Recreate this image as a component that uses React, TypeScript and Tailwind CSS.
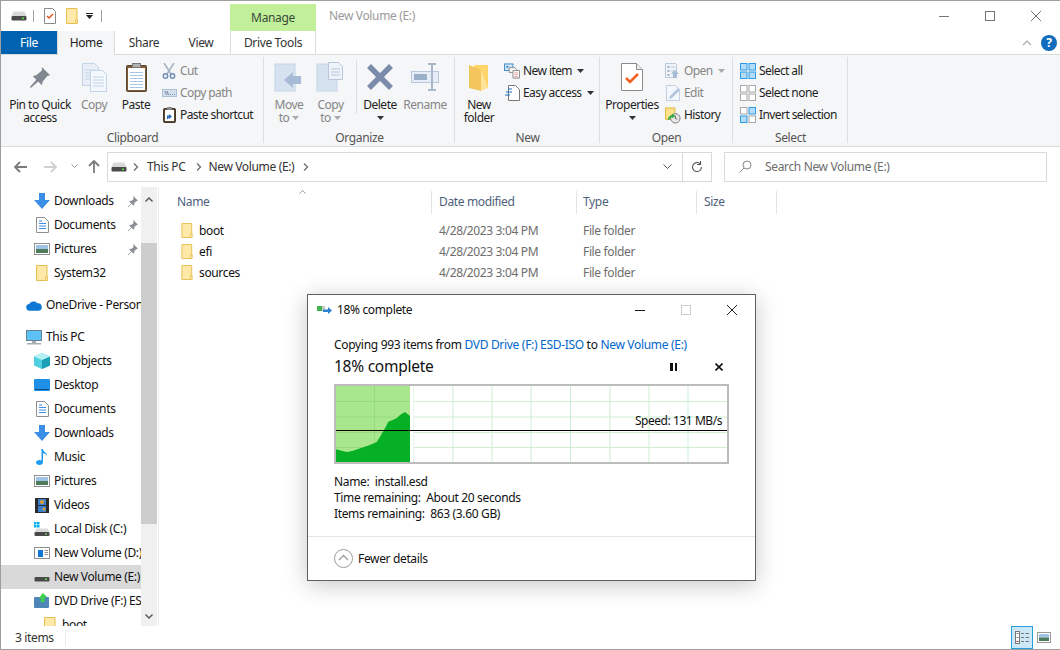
import type { ReactNode } from "react";

const Drive = ({ className = "" }: { className?: string }) => (
  <svg width="16" height="10" viewBox="0 0 16 10" className={className}>
    <path d="M2.5 0.5h11L15.5 5h-15z" fill="#d9d9d9" />
    <rect x="0.5" y="5" width="15" height="4.5" rx="1" fill="#4a4a4a" />
    <rect x="11" y="6.5" width="2" height="1.5" fill="#5ddc4a" />
  </svg>
);

const Folder = ({ w = 12, h = 16 }: { w?: number; h?: number }) => (
  <svg width={w} height={h} viewBox="0 0 12 16">
    <path d="M0.5 0.5h10.5v15h-10.5z" fill="#ffe9a8" stroke="#e6bf4e" />
    <path d="M9.5 11.5h2v4h-2z" fill="#ffe9a8" stroke="#e6bf4e" strokeWidth="0.8" />
  </svg>
);

const DownArrow = () => (
  <svg width="16" height="16" viewBox="0 0 16 16">
    <path d="M5 0h6v7h5l-8 9-8-9h5z" fill="#3a8ee6" />
  </svg>
);

const DocIcon = () => (
  <svg width="13" height="16" viewBox="0 0 13 16">
    <path d="M0.5 0.5h8l4 4v11h-12z" fill="#fff" stroke="#8f8f8f" />
    <path d="M3 4h3M3 6.5h7M3 9h7M3 11.5h7" stroke="#3a8ee6" />
  </svg>
);

const PicIcon = () => (
  <svg width="16" height="12" viewBox="0 0 16 12">
    <rect x="0.5" y="0.5" width="15" height="11" fill="#fff" stroke="#8f8f8f" />
    <rect x="2" y="2" width="12" height="4" fill="#9fc3e6" />
    <rect x="2" y="6" width="12" height="4" fill="#4f7d5c" />
  </svg>
);

const PinSmall = () => (
  <svg width="11" height="11" viewBox="0 0 11 11">
    <path d="M6.5 0.5l4 4-1.5.5-2 2.5-.5 2-2-2-3.5 3.5 3.5-3.5-2-2 2-.5 2.5-2z" fill="#8a8f96" stroke="#8a8f96" strokeWidth="0.6" />
  </svg>
);

const Cloud = () => (
  <svg width="17" height="11" viewBox="0 0 17 11">
    <path d="M4 11a3.5 3.5 0 0 1-.5-7A5 5 0 0 1 12 3.2 3.9 3.9 0 0 1 13.5 11z" fill="#0f78d4" />
  </svg>
);

const Monitor = () => (
  <svg width="16" height="15" viewBox="0 0 16 15">
    <rect x="0.5" y="0.5" width="15" height="10" fill="#5cc2f5" stroke="#6a7f90" />
    <rect x="6" y="11" width="4" height="2" fill="#a5adb5" />
    <rect x="1" y="13" width="14" height="1.5" fill="#a5adb5" />
  </svg>
);

const Cube = () => (
  <svg width="16" height="16" viewBox="0 0 16 16">
    <path d="M8 0l8 3.5v9L8 16l-8-3.5v-9z" fill="#4fd0e0" />
    <path d="M8 7l8-3.5v9L8 16z" fill="#1a9fb5" />
    <path d="M8 0l8 3.5L8 7 0 3.5z" fill="#b5f0f5" />
  </svg>
);

const Desktop = () => (
  <svg width="16" height="12" viewBox="0 0 16 12">
    <rect width="16" height="12" rx="1" fill="#1e90e8" />
    <rect x="1" y="10" width="14" height="1" fill="#0d4f8c" />
  </svg>
);

const Music = () => (
  <svg width="12" height="16" viewBox="0 0 12 16">
    <path d="M5.5 0h1.5c0 3 4 3.5 4 7-1-2-2.500-2.500-4-2.800V13c0 1.700-1.700 3-3.500 3S0 15 0 13.500 1.700 11 3.500 11c.8 0 1.500.2 2 .5z" fill="#1e9bf0" />
  </svg>
);

const Video = () => (
  <svg width="14" height="15" viewBox="0 0 14 15">
    <rect width="14" height="15" fill="#2b2b2b" />
    <rect x="3" y="1" width="8" height="6" fill="#3a7fd0" />
    <rect x="3" y="8" width="8" height="6" fill="#3a7fd0" />
    <circle cx="7" cy="4" r="2" fill="#e0a030" />
    <circle cx="9" cy="11" r="1.500" fill="#e0a030" />
  </svg>
);

const LocalDisk = () => (
  <svg width="16" height="14" viewBox="0 0 16 14">
    <path d="M0 0h2.500v2.500H0zM3 0h2.500v2.500H3zM0 3h2.500v2.500H0zM3 3h2.500v2.500H3z" fill="#00adef" />
    <path d="M2.500 6.500h11L15.500 10H.5z" fill="#d9d9d9" />
    <rect x="0.5" y="10" width="15" height="4" rx="1" fill="#4a4a4a" />
    <rect x="11" y="11.500" width="2" height="1.200" fill="#5ddc4a" />
  </svg>
);

const VolumeD = () => (
  <svg width="16" height="12" viewBox="0 0 16 12">
    <rect x="0.5" y="0.5" width="15" height="11" fill="#fff" stroke="#8f8f8f" />
    <rect x="4" y="3" width="5" height="7" fill="#0f78d4" />
    <path d="M10.500 3.500H14M10.500 5.500H14M10.500 7.500H14" stroke="#8f8f8f" />
  </svg>
);

const Dvd = () => (
  <svg width="16" height="16" viewBox="0 0 16 16">
    <rect x="0" y="4" width="15" height="11" rx="1" fill="#4f86b8" />
    <path d="M9 0l4 4-2.500.5V9H6l1.500-2.500L5 5z" fill="#3fd14a" />
  </svg>
);

const Clipboard = () => (
  <svg width="21" height="30" viewBox="0 0 21 30">
    <rect x="0.500" y="3.500" width="20" height="26" rx="1" fill="#7a5a38" stroke="#5a452e" />
    <rect x="2" y="6" width="17" height="22" fill="#fff" />
    <path d="M4 10.500h13M4 13.500h13M4 16.500h13M4 19.500h13M4 22.500h13M4 25.500h13" stroke="#a8c6ea" />
    <rect x="6.500" y="1.500" width="8" height="4" fill="#b0b0b0" stroke="#777" />
  </svg>
);

const Pin = () => (
  <svg width="22" height="22" viewBox="0 0 24 24">
    <path d="M14 1l9 9-3 1-5 6-1 4-4-4-8 7-1-1 7-8-4-4 4-1 6-5z" fill="#7f8790" />
  </svg>
);

const CopyDocs = ({ c = "#c3d4ea" }: { c?: string }) => (
  <svg width="25" height="29" viewBox="0 0 25 29">
    <path d="M0.500 0.500h12l4 4v18h-16z" fill="#e9eff7" stroke={c} />
    <path d="M3 7h10M3 10h10M3 13h10M3 16h10" stroke={c} />
    <path d="M8.500 7.500h12l4 4v17h-16z" fill="#f4f7fb" stroke={c} />
    <path d="M11 14h11M11 17h11M11 20h11M11 23h11" stroke={c} />
  </svg>
);

const PanelArrow = ({ copy }: { copy?: boolean }) => (
  <svg width="30" height="30" viewBox="0 0 30 30">
    <rect x="1" y="2" width="20" height="27" fill="#d7e2f1" stroke="#c6d4e8" />
    {copy ? (
      <>
        <path d="M12.500 0.500h10l4 4v13h-14z" fill="#eef3f9" stroke="#b7c6da" />
        <path d="M15 7h9M15 10h9M15 13h9" stroke="#b7c6da" />
      </>
    ) : (
      <path d="M10 19l9-8v4h8v8h-8v4z" transform="translate(0 -1)" fill="#a6bbd6" />
    )}
  </svg>
);

const BigX = () => (
  <svg width="28" height="28" viewBox="0 0 28 28">
    <path d="M3 3l22 22M25 3L3 25" stroke="#7b8cab" strokeWidth="5.500" />
  </svg>
);

const RenameIcon = () => (
  <svg width="28" height="28" viewBox="0 0 28 28">
    <rect x="0.500" y="8.500" width="27" height="11" fill="#e6edf6" stroke="#b9c8dc" />
    <rect x="3" y="11" width="13" height="6" fill="#9db0ca" />
    <path d="M17 1h8M21 1v26M17 27h8" stroke="#a9b7ca" strokeWidth="2" fill="none" />
  </svg>
);

const NewFolderIcon = () => (
  <svg width="20" height="28" viewBox="0 0 20 28">
    <path d="M5 2h14v23H5z" fill="#ffd56a" />
    <path d="M0 2l12 5v21L0 25z" fill="#f2c65c" />
    <path d="M12 7v21l7-3" fill="#ffe49a" />
  </svg>
);

const PropsIcon = () => (
  <svg width="22" height="28" viewBox="0 0 22 28">
    <path d="M0.500 0.500h15l6 6v21h-21z" fill="#fff" stroke="#8a8a8a" />
    <path d="M15.500 0.500v6h6" fill="#eee" stroke="#8a8a8a" />
    <path d="M5 15l4 4 8-8" fill="none" stroke="#f0611e" strokeWidth="2.500" />
  </svg>
);

const PropsSmall = () => (
  <svg width="12" height="16" viewBox="0 0 12 16">
    <path d="M0.500 0.500h8l3 3v12h-11z" fill="#fff" stroke="#8a8a8a" />
    <path d="M3 8l2 2 4-4" fill="none" stroke="#e8541c" strokeWidth="1.500" />
  </svg>
);

const Caret = ({ c = "#333" }: { c?: string }) => (
  <svg width="7" height="4" viewBox="0 0 7 4" className="shrink-0">
    <path d="M0 0h7L3.500 4z" fill={c} />
  </svg>
);

const Scissors = () => (
  <svg width="16" height="16" viewBox="0 0 16 16">
    <path d="M3 0l7 11M13 0L6 11" stroke="#a9b4c4" strokeWidth="1.600" />
    <circle cx="4.500" cy="13" r="2.200" fill="none" stroke="#6f8cb5" strokeWidth="1.400" />
    <circle cx="11.500" cy="13" r="2.200" fill="none" stroke="#6f8cb5" strokeWidth="1.400" />
  </svg>
);

const CopyPath = () => (
  <svg width="15" height="8" viewBox="0 0 15 8">
    <rect x="0.500" y="0.500" width="14" height="7" fill="#d5e0ef" stroke="#aebfd6" />
    <path d="M3 2l1.500 4M5 2l1.500 4M8 5.500h.8M10 5.500h.8M12 5.500h.8" stroke="#5d6f88" strokeWidth="0.800" />
  </svg>
);

const PasteShort = () => (
  <svg width="13" height="16" viewBox="0 0 13 16">
    <rect x="0.500" y="1.500" width="12" height="14" rx="1" fill="#5b4630" stroke="#46372a" />
    <rect x="2" y="3" width="9" height="11" fill="#fff" />
    <rect x="4" y="0" width="5" height="3" fill="#8a8a8a" />
    <path d="M4 12V8.500h2V7l3 2.500L6 12v-1.500H5.500V12z" fill="#2466b5" />
  </svg>
);

const NewItem = () => (
  <svg width="17" height="16" viewBox="0 0 17 16">
    <rect x="0.500" y="0.500" width="9" height="7" fill="#cfe3f7" stroke="#3f88c5" />
    <rect x="2.500" y="2.500" width="2" height="2" fill="#3f88c5" />
    <path d="M5.500 4.500h6l2 2v3h-8z" fill="#fff" stroke="#888" />
    <path d="M9.500 7.500h7v8h-7z" fill="#fff" stroke="#888" />
    <path d="M11 10h4M11 12h4M11 14h4" stroke="#e39a9a" />
  </svg>
);

const EasyAccess = () => (
  <svg width="15" height="16" viewBox="0 0 15 16">
    <path d="M3.500 0.500h7l4 4v11h-11z" fill="#fff" stroke="#777" />
    <path d="M3 4h4M1 7h6M0 10h5" stroke="#1f6fc0" strokeWidth="1.200" />
  </svg>
);

const OpenIcon = () => (
  <svg width="16" height="16" viewBox="0 0 16 16">
    <path d="M0.500 0.500h10l1 1v13h-11z" fill="#f0f4f9" stroke="#b9c8dc" />
    <path d="M2.500 3h2v2h-2zM2.500 7h2v2h-2zM2.500 11h2v2h-2z" fill="#9db0ca" />
    <path d="M6 4h4M6 8h3" stroke="#b9c8dc" />
    <path d="M8 15v-4H6l4-4 4 4h-2v4z" fill="#a6bbd6" />
  </svg>
);

const EditIcon = () => (
  <svg width="15" height="16" viewBox="0 0 15 16">
    <path d="M0.500 0.500h9l4 4v11h-13z" fill="#f4f7fb" stroke="#c3d0e2" />
    <path d="M3 14l1-3 8-8 2 2-8 8z" fill="#b3c6e0" />
  </svg>
);

const HistoryIcon = () => (
  <svg width="17" height="17" viewBox="0 0 17 17">
    <rect x="0.500" y="0.500" width="10" height="12" fill="#ffe28a" stroke="#e2b93f" />
    <circle cx="11" cy="11.500" r="5" fill="#e8e8e8" stroke="#777" />
    <path d="M11 8.500v3l2 1" stroke="#555" fill="none" />
    <path d="M3 13a5 5 0 0 1 5-5l-1-2 4 3-4 3 1-2a3 3 0 0 0-3 3z" fill="#2fae3d" />
  </svg>
);

const SelectIcon = ({ on }: { on: boolean[] }) => (
  <svg width="16" height="16" viewBox="0 0 16 16">
    {[0, 1, 2, 3].map((i) => {
      const x = i % 2 === 0 ? 0.5 : 9;
      const y = i < 2 ? 0.5 : 9;
      return (
        <rect
          key={i}
          x={x}
          y={y}
          width="6.500"
          height="6.500"
          fill={on[i] ? "#b5dcf7" : "#fff"}
          stroke={on[i] ? "#2f9be8" : "#a8a8a8"}
        />
      );
    })}
  </svg>
);

const LargeBtn = ({ w, icon, label, gray, caret }: { w: number; icon: ReactNode; label: ReactNode; gray?: boolean; caret?: boolean }) => (
  <div style={{ width: w }} className={`flex flex-col items-center shrink-0 text-center leading-[13px] tracking-[-0.5px] ${gray ? "text-[#858585]" : "text-[#1f1f1f]"}`}>
    <div className="h-[32px] mt-[2px] flex items-center justify-center">{icon}</div>
    <div className="mt-[5px] whitespace-nowrap">{label}</div>
    {caret && (
      <div className="mt-[5px]">
        <Caret c="#333" />
      </div>
    )}
  </div>
);

const SmallBtn = ({ icon, label, gray, caret, iconW = 16 }: { icon: ReactNode; label: string; gray?: boolean; caret?: "dark" | "light"; iconW?: number }) => (
  <div className={`h-[22px] pt-[2px] flex items-center whitespace-nowrap tracking-[-0.58px] ${gray ? "text-[#858585]" : "text-[#1f1f1f]"}`}>
    <div style={{ width: iconW }} className="flex justify-center shrink-0">
      {icon}
    </div>
    <span className="ml-[3px]">{label}</span>
    {caret && (
      <span className="ml-[5px]">
        <Caret c={caret === "dark" ? "#333" : "#aaa"} />
      </span>
    )}
  </div>
);

const Group = ({ w, label, children }: { w: number; label: string; children: ReactNode }) => (
  <div style={{ width: w }} className="h-full flex flex-col shrink-0 relative">
    <div className="flex-1 flex pt-[4px] min-h-0">{children}</div>
    <div className="h-[18px] -mb-px text-center leading-[18px] text-[#555]">{label}</div>
    <div className="absolute right-0 top-[2px] bottom-[3px] w-px bg-[#dcdddf]" />
  </div>
);

const SideRow = ({ icon, label, pin, sel, pad = 33 }: { icon: ReactNode; label: string; pin?: boolean; sel?: boolean; pad?: number }) => (
  <div style={{ paddingLeft: pad }} className={`h-[24px] w-[140px] flex items-center shrink-0 relative overflow-hidden whitespace-nowrap text-[#111] ${sel ? "bg-[#d9d9d9]" : ""}`}>
    <div className="w-[16px] flex justify-center shrink-0">{icon}</div>
    <span className="ml-[4px]">{label}</span>
    {pin && (
      <span className="absolute right-[3px] top-[7px]">
        <PinSmall />
      </span>
    )}
  </div>
);

const Row = ({ name }: { name: string }) => (
  <div className="h-[21px] flex items-center">
    <div className="w-[21px] pl-[3px] flex items-center">
      <Folder w={12} h={15} />
    </div>
    <span className="w-[240px] text-[#111]">{name}</span>
    <span className="w-[144px] text-[#6d6d6d]">4/28/2023 3:04 PM</span>
    <span className="text-[#6d6d6d]">File folder</span>
  </div>
);

const HeadCell = ({ w, label, pad = 6 }: { w: number; label: string; pad?: number }) => (
  <div style={{ width: w, paddingLeft: pad }} className="h-[23px] shrink-0 border-r border-[#e5e5e5] flex items-center pb-[2px] text-[#4c607a]">
    {label}
  </div>
);

const Chevron = () => (
  <svg width="6" height="8" viewBox="0 0 6 8" className="shrink-0">
    <path d="M1 0.500L4.500 4 1 7.500" fill="none" stroke="#6d6d6d" strokeWidth="1.300" />
  </svg>
);

const SpeedGraph = () => {
  const vs = [38.5, 77.5, 117, 156, 195, 234.500, 274, 313, 352];
  const hs = [15.5, 31, 46.5, 61.5];
  return (
    <svg width="391" height="76" viewBox="0 0 391 76" className="block">
      <rect width="74" height="76" fill="#a9e78f" />
      {vs.map((x) => (
        <line key={x} x1={x} x2={x} y1="0" y2="76" stroke={x < 74 ? "#95dc7c" : "#cdeed2"} />
      ))}
      {hs.map((y) => (
        <g key={y}>
          <line x1="0" x2="74" y1={y} y2={y} stroke="#95dc7c" />
          <line x1="74" x2="391" y1={y} y2={y} stroke="#cdeed2" />
        </g>
      ))}
      <rect x="74" width="3.500" height="76" fill="#fff" />
      <path d="M0 63.300L5.700 64.700 10.700 66 17.300 64.700 25.700 61.700 34 59 40.700 56 44 50.700 49 42.300 52.300 35.700 60.700 32.300 64 29 69 26 74 30V76H0z" fill="#06b025" />
      <line x1="0" x2="391" y1="44.500" y2="44.500" stroke="#000" />
    </svg>
  );
};

export default function App() {
  return (
    <div className="w-[1060px] h-[650px] relative overflow-hidden bg-white flex flex-col border-t border-b border-l border-[#9e9e9e] text-[12px] tracking-[-0.35px] font-['Noto_Sans',sans-serif] leading-none text-[#1f1f1f]">
      {/* title bar */}
      <div className="h-[30px] flex shrink-0 items-start">
        <div className="flex items-center h-[30px]">
          <Drive className="ml-[10px]" />
          <div className="w-px h-[12px] bg-[#a0a0a0] ml-[6px]" />
          <div className="ml-[10px]">
            <PropsSmall />
          </div>
          <div className="ml-[10px]">
            <Folder w={12} h={16} />
          </div>
          <div className="ml-[8px] flex flex-col items-center gap-[1px]">
            <div className="w-[7px] h-px bg-[#222]" />
            <Caret c="#222" />
          </div>
          <div className="w-px h-[12px] bg-[#a0a0a0] ml-[8px]" />
        </div>
        <div className="ml-[128px] mt-[3px] w-[86px] h-[27px] bg-[#c2f09a] flex items-center justify-center text-[#3a4a3a]">Manage</div>
        <div className="ml-[13px] h-[30px] flex items-center text-[#9a9a9a]">New Volume (E:)</div>
        <div className="ml-auto mr-[1px] flex">
          <div className="w-[46px] h-[30px] flex items-center justify-center">
            <div className="w-[10px] h-px bg-[#777]" />
          </div>
          <div className="w-[46px] h-[30px] flex items-center justify-center pb-[1px]">
            <div className="w-[10px] h-[10px] border border-[#777]" />
          </div>
          <div className="w-[46px] h-[30px] flex items-center justify-center pb-[1px]">
            <svg width="10" height="10" viewBox="0 0 10 10">
              <path d="M0 0l10 10M10 0L0 10" stroke="#777" />
            </svg>
          </div>
        </div>
      </div>

      {/* tabs */}
      <div className="h-[24px] shrink-0 flex border-b border-[#dadbdc] relative">
        <div className="w-[56px] h-[23px] bg-[#0063b1] text-white flex items-center justify-center">File</div>
        <div className="w-[58px] h-[24px] -mb-px bg-[#f5f6f7] border-l border-r border-[#dadbdc] flex items-center justify-center text-[#222] z-10">Home</div>
        <div className="w-[58px] flex items-center justify-center text-[#333]">Share</div>
        <div className="w-[56px] flex items-center justify-center text-[#333]">View</div>
        <div className="ml-[1px] w-[86px] border-l border-r border-[#dadbdc] flex items-center justify-center text-[#333]">Drive Tools</div>
        <div className="ml-auto mr-[3px] flex items-center gap-[9px]">
          <svg width="10" height="6" viewBox="0 0 10 6">
            <path d="M1 5l4-4 4 4" fill="none" stroke="#aaa" strokeWidth="1.200" />
          </svg>
          <div className="w-[16px] h-[16px] rounded-full bg-[#0f6cbd] text-white font-bold text-[12px] flex items-center justify-center tracking-normal">?</div>
        </div>
      </div>

      {/* ribbon */}
      <div className="h-[92px] shrink-0 bg-[#f5f6f7] border-b border-[#dadbdc] flex">
        <Group w={263} label="Clipboard">
          <div className="pl-[3px] flex shrink-0">
            <LargeBtn w={72} icon={<Pin />} label={<>Pin to Quick<br />access</>} />
            <LargeBtn w={36} gray icon={<CopyDocs />} label="Copy" />
            <LargeBtn w={48} icon={<Clipboard />} label="Paste" />
          </div>
          <div className="ml-[1px]">
            <SmallBtn gray icon={<Scissors />} label="Cut" />
            <SmallBtn gray icon={<CopyPath />} label="Copy path" />
            <SmallBtn icon={<PasteShort />} label="Paste shortcut" />
          </div>
        </Group>
        <Group w={191} label="Organize">
          <div className="flex pl-[2px] relative">
            <LargeBtn w={46} gray icon={<PanelArrow />} label={<>Move<br /><span className="inline-flex items-center gap-[3px]">to <Caret c="#aaa" /></span></>} />
            <LargeBtn w={37} gray icon={<PanelArrow copy />} label={<>Copy<br /><span className="inline-flex items-center gap-[3px]">to <Caret c="#aaa" /></span></>} />
            <div className="w-px h-[54px] bg-[#dcdddf] ml-[7px] mt-[1px]" />
            <LargeBtn w={46} icon={<BigX />} label="Delete" caret />
            <LargeBtn w={44} gray icon={<RenameIcon />} label="Rename" />
          </div>
        </Group>
        <Group w={145} label="New">
          <LargeBtn w={48} icon={<NewFolderIcon />} label={<>New<br />folder</>} />
          <div className="ml-[1px]">
            <SmallBtn iconW={16} icon={<NewItem />} label="New item" caret="dark" />
            <SmallBtn iconW={16} icon={<EasyAccess />} label="Easy access" caret="dark" />
          </div>
        </Group>
        <Group w={133} label="Open">
          <div className="pl-[5px] flex">
            <LargeBtn w={54} icon={<PropsIcon />} label="Properties" caret />
            <div className="ml-[6px]">
              <SmallBtn gray icon={<OpenIcon />} label="Open" caret="light" />
              <SmallBtn gray icon={<EditIcon />} label="Edit" />
              <SmallBtn icon={<HistoryIcon />} label="History" />
            </div>
          </div>
        </Group>
        <Group w={115} label="Select">
          <div className="pl-[7px]">
            <SmallBtn icon={<SelectIcon on={[true, true, true, true]} />} label="Select all" />
            <SmallBtn icon={<SelectIcon on={[false, false, false, false]} />} label="Select none" />
            <SmallBtn icon={<SelectIcon on={[false, true, true, false]} />} label="Invert selection" />
          </div>
        </Group>
      </div>

      {/* address bar */}
      <div className="h-[40px] shrink-0 flex items-center pb-[1px]">
        <div className="w-[106px] flex items-center shrink-0">
          <svg width="13" height="12" viewBox="0 0 13 12" className="ml-[13px]">
            <path d="M6 1L1 6l5 5M1 6h12" fill="none" stroke="#7a7a7a" strokeWidth="1.800" />
          </svg>
          <svg width="13" height="12" viewBox="0 0 13 12" className="ml-[17px]">
            <path d="M7 1l5 5-5 5M12 6H0" fill="none" stroke="#d0d0d0" strokeWidth="1.800" />
          </svg>
          <svg width="7" height="5" viewBox="0 0 7 5" className="ml-[14px]">
            <path d="M0.500 0.500L3.500 3.500 6.500 0.500" fill="none" stroke="#9a9a9a" />
          </svg>
          <svg width="12" height="13" viewBox="0 0 12 13" className="ml-[10px]">
            <path d="M1 6l5-5 5 5M6 1v12" fill="none" stroke="#7a7a7a" strokeWidth="1.800" />
          </svg>
        </div>
        <div className="w-[605px] h-[30px] border border-[#d9d9d9] flex items-center shrink-0">
          <Drive className="ml-[3px]" />
          <span className="ml-[6px]">
            <Chevron />
          </span>
          <span className="ml-[8px] text-[#333]">This PC</span>
          <span className="ml-[11px]">
            <Chevron />
          </span>
          <span className="ml-[6px] text-[#333]">New Volume (E:)</span>
          <span className="ml-[9px]">
            <Chevron />
          </span>
          <div className="ml-auto flex items-center h-full">
            <svg width="9" height="6" viewBox="0 0 9 6">
              <path d="M0.500 0.500L4.500 4.500 8.500 0.500" fill="none" stroke="#555" />
            </svg>
            <div className="w-px h-full bg-[#d9d9d9] ml-[10px]" />
            <svg width="12" height="12" viewBox="0 0 12 12" className="mx-[8px]">
              <path d="M10.500 6a4.500 4.500 0 1 1-1.500-3.300" fill="none" stroke="#555" strokeWidth="1.100" />
              <path d="M9.500 0v3.500H6" fill="none" stroke="#555" strokeWidth="1.100" />
            </svg>
          </div>
        </div>
        <div className="ml-[12px] w-[323px] h-[30px] border border-[#d9d9d9] flex items-center shrink-0">
          <svg width="13" height="13" viewBox="0 0 13 13" className="ml-[14px]">
            <circle cx="8" cy="5" r="4" fill="none" stroke="#8a8a8a" />
            <path d="M5 8l-4.500 4.500" stroke="#8a8a8a" />
          </svg>
          <span className="ml-[13px] text-[#6d6d6d]">Search New Volume (E:)</span>
        </div>
      </div>

      {/* main */}
      <div className="h-[439px] shrink-0 flex">
        <div className="w-[140px] shrink-0 overflow-hidden pt-[2px] flex flex-col">
          <SideRow icon={<DownArrow />} label="Downloads" pin />
          <SideRow icon={<DocIcon />} label="Documents" pin />
          <SideRow icon={<PicIcon />} label="Pictures" pin />
          <SideRow icon={<Folder />} label="System32" />
          <div className="h-[8px] shrink-0" />
          <SideRow pad={25} icon={<Cloud />} label="OneDrive - Personal" />
          <div className="h-[8px] shrink-0" />
          <SideRow pad={25} icon={<Monitor />} label="This PC" />
          <SideRow icon={<Cube />} label="3D Objects" />
          <SideRow icon={<Desktop />} label="Desktop" />
          <SideRow icon={<DocIcon />} label="Documents" />
          <SideRow icon={<DownArrow />} label="Downloads" />
          <SideRow icon={<Music />} label="Music" />
          <SideRow icon={<PicIcon />} label="Pictures" />
          <SideRow icon={<Video />} label="Videos" />
          <SideRow icon={<LocalDisk />} label="Local Disk (C:)" />
          <SideRow icon={<VolumeD />} label="New Volume (D:)" />
          <SideRow sel icon={<Drive />} label="New Volume (E:)" />
          <SideRow icon={<Dvd />} label="DVD Drive (F:) ESD-ISO" />
          <SideRow pad={41} icon={<Folder />} label="boot" />
        </div>
        {/* scrollbar */}
        <div className="w-[16px] shrink-0 bg-[#f0f0f0] flex flex-col items-center">
          <div className="h-[56px] w-full shrink-0 flex justify-center pt-[10px]">
            <svg width="8" height="5" viewBox="0 0 8 5">
              <path d="M0.500 4.500L4 1l3.500 3.500" fill="none" stroke="#555" strokeWidth="1.400" />
            </svg>
          </div>
          <div className="h-[281px] w-full shrink-0 bg-[#cdcdcd]" />
          <div className="flex-1 w-full flex justify-center items-end pb-[7px]">
            <svg width="8" height="5" viewBox="0 0 8 5">
              <path d="M0.500 0.500L4 4l3.500-3.500" fill="none" stroke="#555" strokeWidth="1.400" />
            </svg>
          </div>
        </div>
        <div className="w-[2px] shrink-0 border-r border-[#ececec]" />
        {/* file list */}
        <div className="flex-1 pl-[12px] relative">
          <div className="mt-[4px] flex">
            <HeadCell w={261} label="" />
            <HeadCell w={145} pad={7} label="Date modified" />
            <HeadCell w={120} label="Type" />
            <HeadCell w={80} pad={7} label="Size" />
          </div>
          <div className="absolute left-[18px] top-[9px] text-[#4c607a]">Name</div>
          <svg width="7" height="4" viewBox="0 0 7 4" className="absolute left-[140px] top-[3px]">
            <path d="M0.500 3.500L3.500 0.500 6.500 3.500" fill="none" stroke="#9a9a9a" />
          </svg>
          <div className="mt-[6px] pl-[7px]">
            <Row name="boot" />
            <Row name="efi" />
            <Row name="sources" />
          </div>
        </div>
      </div>

      {/* status bar */}
      <div className="h-[23px] shrink-0 flex items-center text-[#333]">
        <span className="ml-[14px]">3 items</span>
        <div className="ml-[11px] w-px h-[16px] bg-[#ececec]" />
        <div className="ml-auto flex items-center mr-[9px]">
          <div className="w-[22px] h-[23px] bg-[#cce8f7] border border-[#26a0da] flex items-center justify-center">
            <svg width="14" height="13" viewBox="0 0 14 13">
              <rect x="0.500" y="0.500" width="4" height="12" fill="#fff" stroke="#777" />
              <path d="M1.500 2.500h2M1.500 6.500h2" stroke="#777" />
              <path d="M1.500 10.500h2" stroke="#b03030" />
              <path d="M6 2.500h3M10.500 2.500H14M6 6.500h3M10.500 6.500H14M6 10.500h3M10.500 10.500H14" stroke="#777" />
            </svg>
          </div>
          <div className="ml-[4px]">
            <svg width="14" height="11" viewBox="0 0 14 11">
              <rect x="0.500" y="0.500" width="13" height="10" fill="#fff" stroke="#999" />
              <rect x="2" y="2" width="10" height="3.500" fill="#9fc3e6" />
              <rect x="2" y="5.500" width="10" height="3.500" fill="#4f7d5c" />
            </svg>
          </div>
        </div>
      </div>

      {/* copy dialog */}
      <div className="absolute left-[306px] top-[293px] w-[449px] h-[287px] bg-white border border-[#5f5f5f] shadow-[0_4px_22px_rgba(0,0,0,0.22)] flex flex-col">
        <div className="h-[30px] shrink-0 flex items-center">
          <svg width="15" height="10" viewBox="0 0 15 10" className="ml-[9px]">
            <rect x="0" y="1" width="5" height="5" fill="#3eb34f" />
            <rect x="5" y="1" width="3" height="5" fill="#c8c8c8" />
            <path d="M6 4.500h5V2l4 3.500L11 9V7H6z" fill="#2b83d8" />
          </svg>
          <span className="ml-[5px] text-[#111]">18% complete</span>
          <div className="ml-auto flex">
            <div className="w-[46px] h-[30px] flex items-center justify-center">
              <div className="w-[10px] h-px bg-[#111]" />
            </div>
            <div className="w-[46px] h-[30px] flex items-center justify-center">
              <div className="w-[10px] h-[10px] border border-[#ccc]" />
            </div>
            <div className="w-[46px] h-[30px] flex items-center justify-center">
              <svg width="10" height="10" viewBox="0 0 10 10">
                <path d="M0 0l10 10M10 0L0 10" stroke="#222" />
              </svg>
            </div>
          </div>
        </div>
        <div className="pl-[26px] pr-[26px] flex flex-col flex-1">
          <div className="mt-[12px] h-[16px] flex items-center whitespace-nowrap text-[#111] tracking-[-0.31px]">
            Copying 993 items from&nbsp;<span className="text-[#0066cc]">DVD Drive (F:) ESD-ISO</span>&nbsp;to&nbsp;<span className="text-[#0066cc]">New Volume (E:)</span>
          </div>
          <div className="mt-[2px] h-[24px] flex items-center">
            <span className="text-[15.500px] text-[#111] tracking-[-0.25px]">18% complete</span>
            <div className="ml-auto flex items-center mr-[6px]">
              <div className="flex gap-[2px]">
                <div className="w-[2.500px] h-[8px] bg-[#111]" />
                <div className="w-[2.500px] h-[8px] bg-[#111]" />
              </div>
              <svg width="8" height="8" viewBox="0 0 8 8" className="ml-[38px]">
                <path d="M0.500 0.500l7 7M7.500 0.500l-7 7" stroke="#111" strokeWidth="1.600" />
              </svg>
            </div>
          </div>
          <div className="mt-[5px] w-[395px] h-[80px] border-2 border-[#bcbcbc] relative bg-white">
            <SpeedGraph />
            <span className="absolute right-[5px] top-[29px] text-[#111] tracking-[-0.45px]">Speed: 131 MB/s</span>
          </div>
          <div className="mt-[10px] flex flex-col text-[#111]">
            <div className="h-[16px] flex items-center">Name:&nbsp; install.esd</div>
            <div className="h-[16px] flex items-center">Time remaining:&nbsp; About 20 seconds</div>
            <div className="h-[16px] flex items-center">Items remaining:&nbsp; 863 (3.60 GB)</div>
          </div>
        </div>
        <div className="h-[44px] shrink-0 border-t border-[#e5e5e5] flex items-center pl-[26px]">
          <svg width="19" height="19" viewBox="0 0 19 19">
            <circle cx="9.500" cy="9.500" r="9" fill="#fff" stroke="#9a9a9a" />
            <path d="M5 11l4.500-4.500L14 11" fill="none" stroke="#9a9a9a" strokeWidth="1.300" />
          </svg>
          <span className="ml-[5px] text-[#111]">Fewer details</span>
        </div>
      </div>
    </div>
  );
}
